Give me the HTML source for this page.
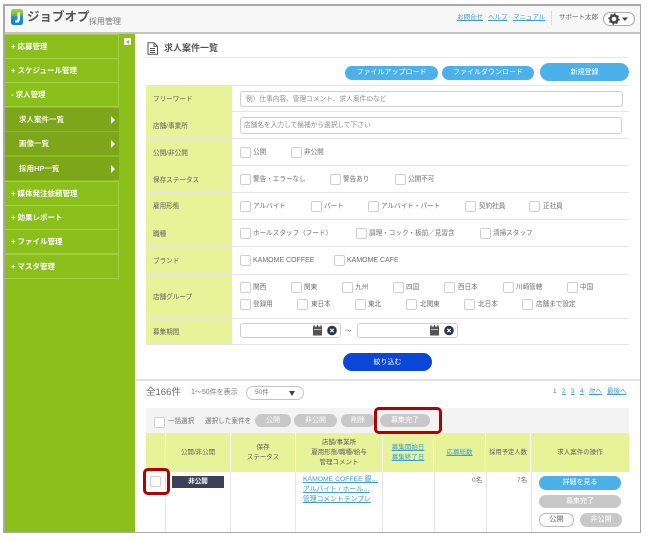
<!DOCTYPE html>
<html lang="ja"><head><meta charset="utf-8"><style>
html,body{margin:0;padding:0;background:#fff}
body{width:647px;height:541px;position:relative;overflow:hidden;font-family:"Liberation Sans","Noto Sans CJK JP",sans-serif;font-size:7px;color:#666}
#w{position:absolute;left:0;top:0;width:647px;height:541px;overflow:hidden;filter:blur(.35px)}
#w div,#w span,#w a,#w svg{position:absolute;white-space:nowrap;box-sizing:border-box}
.m{left:5px;width:114px;border:1px solid #a3cf45;border-left:0;color:#fff;font-size:7.5px;font-weight:bold;padding-left:6px}
.s{left:5px;width:114px;background:#7da61a;color:#f2f5df;font-size:7.5px;font-weight:bold;padding-left:14px}
.s i{position:absolute;left:106px;top:8px;width:0;height:0;border-left:4px solid #fff;border-top:4px solid transparent;border-bottom:4px solid transparent}
.l{left:146px;width:86px;background:#e6f398;color:#5f5f5f;font-size:6.6px;padding-left:7px;padding-top:1.5px}
.h{left:146px;width:483px;height:1px;background:#e6e6e6}
.c{width:11px;height:11px;border:1px solid #cfcfcf;border-radius:2px;background:#fff}
.t{font-size:6.6px;line-height:11px;color:#6e6e6e;margin-top:1px}
.i{background:#fff;border:1px solid #cfcfcf;border-radius:3px;color:#8e8e8e;font-size:6.7px;padding-left:7px}
.b{border-radius:9px;color:#fff;text-align:center;font-size:7px;background:#c8c8c8}
.bl{background:#4db1e9}
.th{top:433px;height:39px;background:#e6f398;color:#5f5f5f;font-size:6.5px;line-height:10px;text-align:center;display:flex;align-items:center;justify-content:center}
.v{top:472px;width:1px;height:60px;background:#e6e6e6}
a{color:#3b9bd6;text-decoration:underline}
.r{border:3px solid #b30000;border-radius:5px}
</style></head><body><div id="w">
<div style="left:3px;top:4px;width:638px;height:529px;border:2px solid #a9a9a9;border-width:2px 1px 1px 2px;background:#fff"></div>
<div style="left:5px;top:6px;width:635px;height:27px;background:#f7f7f7"></div>
<div style="left:5px;top:32px;width:635px;height:2px;background:#c4c4c4"></div>
<svg style="left:11px;top:9px" width="12" height="16" viewBox="0 0 12 16"><defs><linearGradient id="g" x1="0" y1="0" x2="0" y2="1"><stop offset="0" stop-color="#b6d21e"/><stop offset=".35" stop-color="#6cc04a"/><stop offset=".5" stop-color="#1c8fd8"/><stop offset="1" stop-color="#1680d0"/></linearGradient></defs><rect x="0" y="0" width="12" height="16" rx="2.500" fill="url(#g)"/><path d="M6.500 3.500h2.500v7.500l-1.500 2.500h-3.500v-2h1.500l1-1.500z" fill="#fff"/></svg>
<div style="left:27px;top:8px;font-size:12.5px;line-height:18px;font-weight:bold;color:#555">ジョブオプ</div>
<div style="left:89px;top:16px;font-size:8px;line-height:11px;color:#777">採用管理</div>
<a style="left:457px;top:12px;font-size:6.500px;line-height:11px">お問合せ</a>
<a style="left:488px;top:12px;font-size:6.500px;line-height:11px">ヘルプ</a>
<a style="left:513px;top:12px;font-size:6.500px;line-height:11px">マニュアル</a>
<div style="left:551px;top:11px;width:1px;height:14px;background:#ddd"></div>
<div style="left:559px;top:12px;font-size:6.500px;line-height:11px;color:#666">サポート太郎</div>
<div style="left:603px;top:12px;width:32px;height:14px;border:1px solid #aaa;border-radius:7px;background:#fff"></div>
<svg style="left:608px;top:13px" width="24" height="12" viewBox="0 0 24 12"><circle cx="6" cy="6" r="3.500" fill="none" stroke="#444" stroke-width="2.400"/><circle cx="6" cy="6" r="5" fill="none" stroke="#444" stroke-width="1.400" stroke-dasharray="1.600 2.300"/><path d="M14 4.500h6l-3 3.500z" fill="#444"/></svg>

<div style="left:5px;top:34px;width:130px;height:498px;background:#8bbf1c"></div>
<div style="left:124px;top:38px;width:7px;height:7px;background:#fff;border-radius:1px"></div>
<div style="left:126px;top:39.5px;width:0;height:0;border-right:3px solid #8bbf1c;border-top:2px solid transparent;border-bottom:2px solid transparent"></div>
<div class="m" style="top:34px;height:25px;line-height:23px">+ 応募管理</div>
<div class="m" style="top:58px;height:25px;line-height:24px">+ スケジュール管理</div>
<div class="m" style="top:82px;height:25px;line-height:24px">- 求人管理</div>
<div class="s" style="top:108px;height:23px;line-height:23px">求人案件一覧<i></i></div>
<div class="s" style="top:132px;height:23px;line-height:23px">画像一覧<i></i></div>
<div class="s" style="top:157px;height:23px;line-height:23px">採用HP一覧<i></i></div>
<div class="m" style="top:181px;height:25px;line-height:23px">+ 媒体発注依頼管理</div>
<div class="m" style="top:205px;height:25px;line-height:24px">+ 効果レポート</div>
<div class="m" style="top:229px;height:25px;line-height:24px">+ ファイル管理</div>
<div class="m" style="top:254px;height:25px;line-height:24px">+ マスタ管理</div>

<svg style="left:146px;top:42px" width="13" height="13" viewBox="0 0 13 13"><path d="M2 .7h6l3.500 3.500v8H2zM8 .7v3.500h3.500M4 6.500h5M4 8.500h5M4 10.500h5" fill="none" stroke="#555" stroke-width="1"/></svg>
<div style="left:164px;top:42px;font-size:9px;line-height:12px;font-weight:bold;color:#555">求人案件一覧</div>
<div style="left:145px;top:57px;width:484px;height:1px;background:#e8e8e8"></div>
<div class="b bl" style="left:345px;top:66px;width:93px;height:14px;line-height:14px;border-radius:7px">ファイルアップロード</div>
<div class="b bl" style="left:442px;top:66px;width:92px;height:14px;line-height:14px;border-radius:7px">ファイルダウンロード</div>
<div class="b bl" style="left:540px;top:63px;width:89px;height:18px;line-height:20px">新規登録</div>

<div class="h" style="top:85px"></div>
<div class="l" style="top:86px;height:25px;line-height:24px">フリーワード</div>
<div class="l" style="top:112px;height:26px;line-height:25px">店舗/事業所</div>
<div class="l" style="top:139px;height:26px;line-height:25px">公開/非公開</div>
<div class="l" style="top:166px;height:26px;line-height:25px">保存ステータス</div>
<div class="l" style="top:193px;height:26px;line-height:24px">雇用形態</div>
<div class="l" style="top:220px;height:26px;line-height:25px">職種</div>
<div class="l" style="top:247px;height:27px;line-height:25px">ブランド</div>
<div class="l" style="top:275px;height:43px;line-height:42px">店舗グループ</div>
<div class="l" style="top:319px;height:25px;line-height:24px">募集期間</div>
<div class="h" style="top:111px"></div><div class="h" style="top:138px"></div><div class="h" style="top:165px"></div><div class="h" style="top:192px"></div><div class="h" style="top:219px"></div><div class="h" style="top:246px"></div><div class="h" style="top:274px"></div><div class="h" style="top:318px"></div><div class="h" style="top:344px"></div>

<div class="i" style="left:240px;top:91px;width:383px;height:16px;line-height:15px;padding-left:5px">例）仕事内容、管理コメント、求人案件IDなど</div>
<div class="i" style="left:240px;top:117px;width:382px;height:17px;line-height:16px;padding-left:3px">店舗名を入力して候補から選択して下さい</div>

<div class="c" style="left:240px;top:147px"></div><div class="t" style="left:253px;top:146px">公開</div>
<div class="c" style="left:291px;top:147px"></div><div class="t" style="left:304px;top:146px">非公開</div>

<div class="c" style="left:240px;top:174px"></div><div class="t" style="left:253px;top:173px">警告・エラーなし</div>
<div class="c" style="left:330px;top:174px"></div><div class="t" style="left:343px;top:173px">警告あり</div>
<div class="c" style="left:395px;top:174px"></div><div class="t" style="left:408px;top:173px">公開不可</div>

<div class="c" style="left:240px;top:201px"></div><div class="t" style="left:253px;top:200px">アルバイト</div>
<div class="c" style="left:311px;top:201px"></div><div class="t" style="left:324px;top:200px">パート</div>
<div class="c" style="left:368px;top:201px"></div><div class="t" style="left:381px;top:200px">アルバイト・パート</div>
<div class="c" style="left:465px;top:201px"></div><div class="t" style="left:479px;top:200px">契約社員</div>
<div class="c" style="left:529px;top:201px"></div><div class="t" style="left:543px;top:200px">正社員</div>

<div class="c" style="left:240px;top:228px"></div><div class="t" style="left:253px;top:227px">ホールスタッフ（フード）</div>
<div class="c" style="left:356px;top:228px"></div><div class="t" style="left:369px;top:227px">調理・コック・板前／見習含</div>
<div class="c" style="left:480px;top:228px"></div><div class="t" style="left:493px;top:227px">清掃スタッフ</div>

<div class="c" style="left:240px;top:255px"></div><div class="t" style="left:253px;top:254px;font-size:7px">KAMOME COFFEE</div>
<div class="c" style="left:334px;top:255px"></div><div class="t" style="left:347px;top:254px;font-size:7px">KAMOME CAFE</div>

<div class="c" style="left:240px;top:282px"></div><div class="t" style="left:253px;top:281px">関西</div>
<div class="c" style="left:291px;top:282px"></div><div class="t" style="left:304px;top:281px">関東</div>
<div class="c" style="left:342px;top:282px"></div><div class="t" style="left:355px;top:281px">九州</div>
<div class="c" style="left:393px;top:282px"></div><div class="t" style="left:406px;top:281px">四国</div>
<div class="c" style="left:444px;top:282px"></div><div class="t" style="left:458px;top:281px">西日本</div>
<div class="c" style="left:503px;top:282px"></div><div class="t" style="left:516px;top:281px">川崎管轄</div>
<div class="c" style="left:567px;top:282px"></div><div class="t" style="left:580px;top:281px">中国</div>
<div class="c" style="left:240px;top:299px"></div><div class="t" style="left:253px;top:298px">登録用</div>
<div class="c" style="left:297px;top:299px"></div><div class="t" style="left:311px;top:298px">東日本</div>
<div class="c" style="left:355px;top:299px"></div><div class="t" style="left:368px;top:298px">東北</div>
<div class="c" style="left:406px;top:299px"></div><div class="t" style="left:420px;top:298px">北関東</div>
<div class="c" style="left:464px;top:299px"></div><div class="t" style="left:478px;top:298px">北日本</div>
<div class="c" style="left:522px;top:299px"></div><div class="t" style="left:536px;top:298px">店舗まで設定</div>

<div class="i" style="left:240px;top:323px;width:101px;height:15px"></div>
<div class="i" style="left:357px;top:323px;width:101px;height:15px"></div>
<svg style="left:312px;top:325px" width="25" height="11" viewBox="0 0 25 11"><path d="M1 1.500h9v9H1z" fill="#555"/><path d="M2 0v3M5.500 0v3M9 0v3" stroke="#555"/><path d="M2 4.500h7" stroke="#fff" stroke-width=".6"/><circle cx="20" cy="5.500" r="4.800" fill="#2d3345"/><path d="M18.300 3.800l3.400 3.400m0-3.400l-3.400 3.400" stroke="#fff" stroke-width="1.100"/></svg>
<svg style="left:429px;top:325px" width="25" height="11" viewBox="0 0 25 11"><path d="M1 1.500h9v9H1z" fill="#555"/><path d="M2 0v3M5.500 0v3M9 0v3" stroke="#555"/><path d="M2 4.500h7" stroke="#fff" stroke-width=".6"/><circle cx="20" cy="5.500" r="4.800" fill="#2d3345"/><path d="M18.300 3.800l3.400 3.400m0-3.400l-3.400 3.400" stroke="#fff" stroke-width="1.100"/></svg>
<div class="t" style="left:345px;top:325px;color:#777">～</div>
<div class="b" style="left:343px;top:353px;width:89px;height:18px;line-height:20px;background:#0a47d8">絞り込む</div>

<div style="left:136px;top:379px;width:504px;height:2px;background:#e2e2ea"></div>
<div style="left:146px;top:386px;font-size:9.500px;line-height:14px;color:#666">全166件</div>
<div style="left:191px;top:387px;font-size:7px;line-height:11px;color:#777">1～50件を表示</div>
<div style="left:246px;top:386px;width:58px;height:14px;border:1px solid #c4c4c4;border-radius:7px;background:#fff;font-size:6.500px;line-height:12px;padding-left:8px;color:#777">50件</div>
<div style="left:289px;top:391px;width:0;height:0;border-top:5px solid #444;border-left:3px solid transparent;border-right:3px solid transparent"></div>
<div style="left:553px;top:386px;font-size:6.500px;line-height:11px;color:#777">1</div>
<a style="left:562px;top:386px;font-size:6.500px;line-height:11px">2</a>
<a style="left:571px;top:386px;font-size:6.500px;line-height:11px">3</a>
<a style="left:580px;top:386px;font-size:6.500px;line-height:11px">4</a>
<a style="left:589px;top:386px;font-size:6.500px;line-height:11px">次へ</a>
<a style="left:607px;top:386px;font-size:6.500px;line-height:11px">最後へ</a>

<div style="left:146px;top:408px;width:483px;height:25px;background:#f3f3f3"></div>
<div class="c" style="left:154px;top:417px"></div>
<div class="t" style="left:168px;top:415px">一括選択</div>
<div class="t" style="left:205px;top:415px">選択した案件を</div>
<div class="b" style="left:255px;top:414px;width:36px;height:13px;line-height:13px;border-radius:7px">公開</div>
<div class="b" style="left:294px;top:414px;width:43px;height:13px;line-height:13px;border-radius:7px">非公開</div>
<div class="b" style="left:341px;top:414px;width:34px;height:13px;line-height:13px;border-radius:7px">削除</div>
<div class="b" style="left:380px;top:414px;width:50px;height:13px;line-height:13px;border-radius:7px">募集完了</div>

<div class="th" style="left:146px;width:19px"></div>
<div class="th" style="left:166px;width:64px">公開/非公開</div>
<div class="th" style="left:231px;width:64px">保存<br>ステータス</div>
<div class="th" style="left:296px;width:86px">店舗/事業所<br>雇用形態/職種/給与<br>管理コメント</div>
<div class="th" style="left:383px;width:50px"><span style="position:static;text-align:center"><u style="color:#3b9bd6">募集開始日</u><br><u style="color:#3b9bd6">募集終了日</u></span></div>
<div class="th" style="left:434px;width:51px"><u style="color:#3b9bd6">応募総数</u></div>
<div class="th" style="left:486px;width:44px;font-size:6.300px">採用予定人数</div>
<div class="th" style="left:531px;width:98px">求人案件の操作</div>

<div class="v" style="left:165px"></div><div class="v" style="left:230px"></div><div class="v" style="left:295px"></div><div class="v" style="left:382px"></div><div class="v" style="left:434px"></div><div class="v" style="left:486px"></div><div class="v" style="left:531px"></div>

<div class="c" style="left:150px;top:476px"></div>
<div style="left:172px;top:476px;width:52px;height:12px;background:#3d4155;color:#fff;text-align:center;font-size:6.500px;line-height:12px;font-weight:bold">非公開</div>
<a style="left:303px;top:475px;width:77px;overflow:hidden;font-size:6.800px;line-height:10px">KAMOME COFFEE 銀…</a>
<a style="left:303px;top:485px;width:77px;overflow:hidden;font-size:6.800px;line-height:10px">アルバイト / ホール…</a>
<a style="left:303px;top:495px;width:77px;overflow:hidden;font-size:6.800px;line-height:10px">管理コメントテンプレ</a>
<div class="t" style="left:472px;top:474px">0名</div>
<div class="t" style="left:517px;top:474px">7名</div>
<div class="b bl" style="left:539px;top:476px;width:82px;height:14px;line-height:14px;border-radius:7px">詳細を見る</div>
<div class="b" style="left:539px;top:495px;width:82px;height:13px;line-height:13px;border-radius:7px">募集完了</div>
<div class="b" style="left:539px;top:513px;width:35px;height:14px;line-height:12px;border-radius:7px;background:#fff;border:1px solid #bbb;color:#666">公開</div>
<div class="b" style="left:580px;top:513px;width:42px;height:14px;line-height:14px;border-radius:7px">非公開</div>

<div class="r" style="left:374px;top:407px;width:68px;height:27px"></div>
<div class="r" style="left:143px;top:468px;width:27px;height:27px"></div>
</div></body></html>
